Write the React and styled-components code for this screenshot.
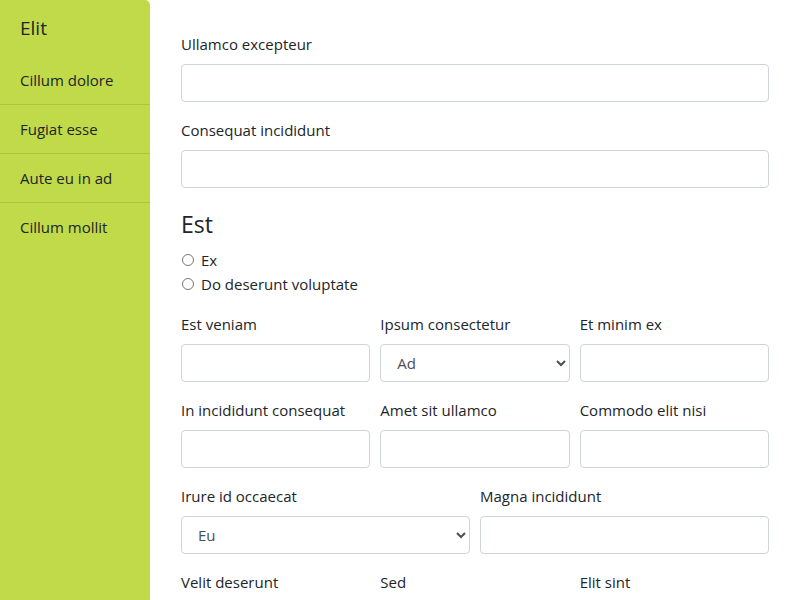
import React from "react";
import styled, { createGlobalStyle } from "styled-components";

const GlobalStyle = createGlobalStyle`
  * { box-sizing: border-box; }
  body {
    margin: 0;
    background: #fff;
    color: #212529;
    font-family: "Open Sans", "Liberation Sans", sans-serif;
    font-size: 15px;
    line-height: 24px;
  }
`;

const Page = styled.div`
  display: flex;
  min-height: 100vh;
`;

const Sidebar = styled.nav`
  width: 150px;
  flex-shrink: 0;
  background: #c0da4a;
  border-radius: 0 5px 5px 0;
`;

const SideTitle = styled.div`
  padding: 16px 20px;
  font-size: 19px;
  line-height: 24px;
`;

const SideItem = styled.div`
  padding: 12px 20px;
  line-height: 24px;
  border-bottom: 1px solid rgba(0, 0, 0, 0.1);
  &:last-child { border-bottom: none; }
`;

const Main = styled.main`
  flex: 1;
  padding: 32px 31px 20px 31px;
`;

const Group = styled.div`
  margin-bottom: 16px;
`;

const Label = styled.label`
  display: block;
  margin-bottom: 8px;
  line-height: 24px;
  white-space: nowrap;
`;

const Input = styled.input`
  display: block;
  width: 100%;
  height: 38px;
  border: 1px solid #ced4da;
  border-radius: 4px;
  padding: 6px 12px;
  font: inherit;
  background: #fff;
`;

const Select = styled.select`
  display: block;
  width: 100%;
  height: 38px;
  border: 1px solid #ced4da;
  border-radius: 4px;
  padding: 6px 12px 6px 12px;
  font: inherit;
  color: #495057;
  background: #fff;
`;

const Heading = styled.h4`
  margin: 0 0 6px;
  padding-top: 2px;
  font-size: 23px;
  font-weight: 400;
  line-height: 36px;
`;

const RadioRow = styled.label`
  display: flex;
  align-items: center;
  gap: 7px;
  line-height: 24px;
  input {
    margin: 0 0 0 1px;
    width: 12px;
    height: 12px;
  }
`;

const Row = styled.div`
  display: grid;
  grid-template-columns: repeat(${(p) => p.cols}, 1fr);
  column-gap: 10px;
`;

const Field = ({ label, children }) => (
  <Group>
    <Label>{label}</Label>
    {children}
  </Group>
);

export default function App() {
  return (
    <>
      <GlobalStyle />
      <Page>
        <Sidebar>
          <SideTitle>Elit</SideTitle>
          <SideItem>Cillum dolore</SideItem>
          <SideItem>Fugiat esse</SideItem>
          <SideItem>Aute eu in ad</SideItem>
          <SideItem>Cillum mollit</SideItem>
        </Sidebar>
        <Main>
          <Field label="Ullamco excepteur"><Input /></Field>
          <Field label="Consequat incididunt"><Input /></Field>
          <Heading>Est</Heading>
          <Group>
            <RadioRow><input type="radio" name="est" />Ex</RadioRow>
            <RadioRow><input type="radio" name="est" />Do deserunt voluptate</RadioRow>
          </Group>
          <Row cols={3}>
            <Field label="Est veniam"><Input /></Field>
            <Field label="Ipsum consectetur">
              <Select defaultValue="Ad"><option>Ad</option></Select>
            </Field>
            <Field label="Et minim ex"><Input /></Field>
          </Row>
          <Row cols={3}>
            <Field label="In incididunt consequat"><Input /></Field>
            <Field label="Amet sit ullamco"><Input /></Field>
            <Field label="Commodo elit nisi"><Input /></Field>
          </Row>
          <Row cols={2}>
            <Field label="Irure id occaecat">
              <Select defaultValue="Eu"><option>Eu</option></Select>
            </Field>
            <Field label="Magna incididunt"><Input /></Field>
          </Row>
          <Row cols={3}>
            <Field label="Velit deserunt"><Input /></Field>
            <Field label="Sed"><Input /></Field>
            <Field label="Elit sint"><Input /></Field>
          </Row>
        </Main>
      </Page>
    </>
  );
}
